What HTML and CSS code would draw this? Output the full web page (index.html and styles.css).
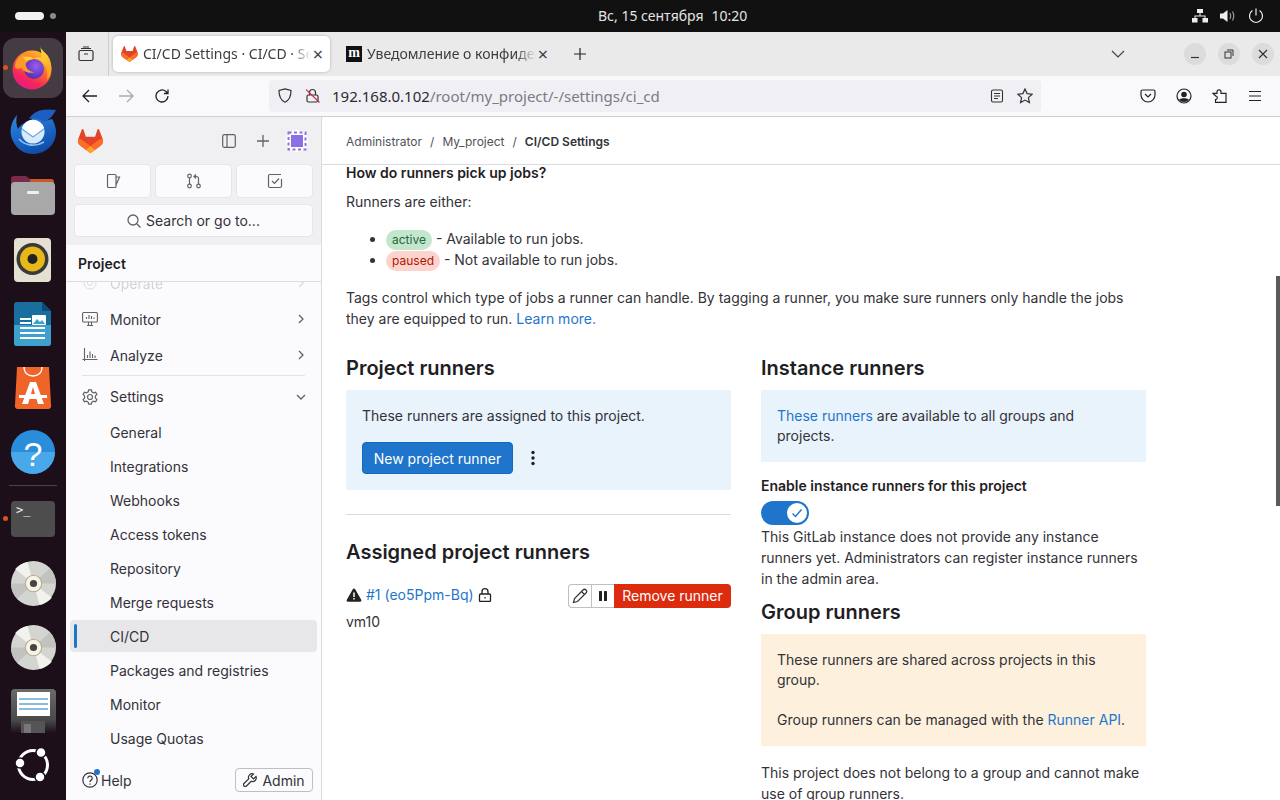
FILE: index.html
```html
<!DOCTYPE html>
<html lang="en">
<head>
  <meta charset="UTF-8">
  <title>CI/CD Settings</title>
  <link rel="stylesheet" href="styles.css">
</head>
<body>

<svg class="defs" width="0" height="0">
  <symbol id="tanuki" viewBox="0 0 25 24">
    <path fill="#E24329" d="m24.507 9.5-.034-.09L21.082.562a.896.896 0 0 0-1.694.091l-2.29 7.01H7.825L5.535.653a.898.898 0 0 0-1.694-.09L.451 9.411.416 9.5a6.297 6.297 0 0 0 2.09 7.278l.012.01.03.022 5.16 3.867 2.56 1.935 1.554 1.176a1.051 1.051 0 0 0 1.268 0l1.555-1.176 2.56-1.935 5.197-3.89.014-.01A6.297 6.297 0 0 0 24.507 9.5Z"/>
    <path fill="#FC6D26" d="m24.507 9.5-.034-.09a11.44 11.44 0 0 0-4.56 2.051l-7.447 5.632 4.742 3.584 5.197-3.89.014-.01A6.297 6.297 0 0 0 24.507 9.5Z"/>
    <path fill="#FCA326" d="m7.707 20.677 2.56 1.935 1.555 1.176a1.051 1.051 0 0 0 1.268 0l1.555-1.176 2.56-1.935-4.743-3.584-4.755 3.584Z"/>
    <path fill="#FC6D26" d="M5.01 11.461a11.43 11.43 0 0 0-4.56-2.05L.416 9.5a6.297 6.297 0 0 0 2.09 7.278l.012.01.03.022 5.16 3.867 4.745-3.584-7.444-5.632Z"/>
  </symbol>
  <symbol id="cd" viewBox="0 0 44 44">
    <circle cx="22" cy="22" r="22" fill="#d4d4d0"/>
    <path fill="#f2f2ee" d="M22 22 4 8a22 22 0 0 1 12-7zM22 22l18 14a22 22 0 0 1-12 7z"/>
    <path fill="#c2c2be" d="M22 22 44 22a22 22 0 0 0-6-15zM22 22H0a22 22 0 0 0 6 15z"/>
    <circle cx="22" cy="22" r="8" fill="#f6f3e6" stroke="#b5ad93"/>
    <circle cx="22" cy="22" r="3.5" fill="#444"/>
  </symbol>
</svg>

<header class="topbar">
  <div class="workspaces"><span class="pill"></span><span class="wsdot"></span></div>
  <div class="clock">Вс, 15 сентября<span class="clock-time">10:20</span></div>
  <div class="tray">
    <svg width="16" height="14" viewBox="0 0 16 14" fill="#eee"><rect x="5" y="0" width="6" height="4"/><rect x="0" y="9" width="5.5" height="4.500"/><rect x="10.500" y="9" width="5.500" height="4.500"/><path d="M7.500 4h1v2.500H13.500V9h-1V7.500h-9V9h-1V6.500h5z"/></svg>
    <svg width="16" height="14" viewBox="0 0 16 14" fill="#eee"><path d="M0 4.500h3L7.500 1v12L3 9.500H0z"/><path d="M10 4q1.500 3 0 6M12.500 2.500q2.500 4.500 0 9" fill="none" stroke="#999" stroke-width="1.200"/></svg>
    <svg width="16" height="16" viewBox="0 0 16 16" fill="none" stroke="#eee" stroke-width="1.200"><path d="M4.500 2.500a6.500 6.500 0 1 0 7 0M8 .5v7"/></svg>
  </div>
</header>

<div class="desktop">
  <nav class="dock">
    <div class="dock-item active">
      <span class="run-dot"></span>
      <svg width="44" height="44" viewBox="0 0 44 44">
        <defs>
          <linearGradient id="ffa" x1="0.800" y1="0.100" x2="0.300" y2="1"><stop offset="0" stop-color="#ffb32e"/><stop offset=".4" stop-color="#ff6a2e"/><stop offset=".75" stop-color="#f5245f"/><stop offset="1" stop-color="#e81a8a"/></linearGradient>
          <linearGradient id="ffc" x1="0.300" y1="0" x2="0.800" y2="1"><stop offset="0" stop-color="#ffe53a"/><stop offset="1" stop-color="#ff9a20"/></linearGradient>
          <radialGradient id="ffb" cx=".6" cy=".35" r=".7"><stop offset="0" stop-color="#9a5cf0"/><stop offset="1" stop-color="#4f2bb0"/></radialGradient>
        </defs>
        <circle cx="21" cy="24" r="19.500" fill="url(#ffa)"/>
        <circle cx="23" cy="23" r="10" fill="url(#ffb)"/>
        <path fill="url(#ffc)" d="M29 0c1 4 5 6 8 10 3 5 4 10 3 16-1 3-2 6-4 8 1-7 0-14-5-18-2-2-6-4-10-3 3-1 7-2 9-1 1-4 0-8-1-12z"/>
        <path fill="#ff9a2a" d="M4 22C4 14 9 9 14 8c-1 2-1 3 0 4 3-1 6-1 9 1-3 0-5 1-6 2-2 1-3 3-2 5 1 4 5 6 9 6-5 2-11 0-14-4-2 1-4 1-6 0z"/>
        <path fill="#ffd23a" d="M12 11c3-1 8-1 11 2-3 0-6 1-8 2-1-1-2-3-3-4z"/>
      </svg>
    </div>
    <div class="dock-item">
      <svg width="48" height="46" viewBox="0 0 48 46">
        <defs>
          <linearGradient id="tba" x1="0.200" y1="0" x2="0.600" y2="1"><stop offset="0" stop-color="#2a86e0"/><stop offset="1" stop-color="#0f4aa8"/></linearGradient>
        </defs>
        <path fill="url(#tba)" d="M8 6C2 13 0 22 3 30c4 10 12 15 21 15 12 0 23-9 23-22 0-5-2-10-4-13l-8 2C29 5 24 8 22 11 15 13 11 17 9 20 7 16 7 11 8 6z"/>
        <path fill="#1c5fc0" d="M20 10C24 2 34-1 47 1c-2 3-4 7-7 9l-5 3c-5-4-11-4-15-3z"/>
        <circle cx="24" cy="23" r="11.500" fill="#d8eafc"/>
        <path fill="#fff" d="M13 19l11 9 11-9a11.500 11.500 0 0 0-22 0z"/>
        <path fill="none" stroke="#6fa8e6" stroke-width="1.200" d="M13 20l11 8 11-8"/>
        <path fill="none" stroke="#7fc0f5" stroke-width="1.800" d="M10 30c6 7 17 8 25 3"/>
      </svg>
    </div>
    <div class="dock-item">
      <svg width="46" height="44" viewBox="0 0 46 44">
        <path fill="#7a2a4a" d="M1 6a3 3 0 0 1 3-3h12l4 3h20a4 4 0 0 1 4 4v8H1z" transform="translate(0 -1)"/>
        <path fill="#c9572b" d="M20 6h21a3 3 0 0 1 3 3v5H20z" transform="translate(0 -1)"/>
        <rect x="1" y="8" width="44" height="33" rx="4" fill="#a8a8a8"/>
        <rect x="17" y="17" width="12" height="3" rx="1" fill="#f0f0f0"/>
      </svg>
    </div>
    <div class="dock-item">
      <svg width="38" height="44" viewBox="0 0 38 44">
        <rect x="0" y="0" width="37" height="44" rx="4" fill="#e4e0d2"/>
        <circle cx="18.500" cy="21" r="16" fill="#3a3a3a"/>
        <circle cx="18.500" cy="21" r="12.500" fill="#e8b818"/>
        <circle cx="18.500" cy="21" r="5" fill="#222"/>
      </svg>
    </div>
    <div class="dock-item">
      <svg width="38" height="46" viewBox="0 0 38 46">
        <path fill="#1a6e9e" d="M3 1h25l9 9v32a3 3 0 0 1-3 3H3a3 3 0 0 1-3-3V4a3 3 0 0 1 3-3z"/>
        <path fill="#3ea0cc" d="M0 24h37v18a3 3 0 0 1-3 3H3a3 3 0 0 1-3-3z"/>
        <path fill="#0d4d72" d="M28 1l9 9h-9z"/>
        <path stroke="#fff" stroke-width="1.800" d="M6 18h11M6 22h11M6 27h25M6 32h25M6 37h25"/>
        <rect x="18" y="14" width="14" height="10" rx="1" fill="#fff"/>
        <path fill="#3ea0cc" d="M19 23l4-5 3 3 2-2 3 4z"/>
      </svg>
    </div>
    <div class="dock-item">
      <svg width="38" height="44" viewBox="0 0 38 44">
        <path fill="#f0642a" d="M3 1h32l2 38a3 3 0 0 1-3 4H4a3 3 0 0 1-3-4z"/>
        <path fill="none" stroke="#fff" stroke-width="1.300" d="M10 1c0 6 4 9 9 9s9-3 9-9"/>
        <path fill="#fff" d="M16 16h6l8 22h-6l-1.500-5h-7L14 38H8zm3 5-2 7h4z"/>
        <rect x="5" y="29" width="28" height="3" fill="#fff"/>
      </svg>
    </div>
    <div class="dock-item">
      <svg width="44" height="44" viewBox="0 0 44 44">
        <circle cx="22" cy="22" r="22" fill="#2a8ddc"/>
        <path fill="#48a8ea" d="M0 22h44a22 22 0 0 1-44 0z"/>
        <text x="22" y="36" class="help-mark">?</text>
      </svg>
    </div>
    <div class="dock-sep"></div>
    <div class="dock-item term">
      <span class="run-dot"></span>
      <div class="term-box">&gt;_</div>
    </div>
    <div class="dock-item disc"><svg width="45" height="45"><use href="#cd"/></svg></div>
    <div class="dock-item disc"><svg width="45" height="45"><use href="#cd"/></svg></div>
    <div class="dock-item">
      <svg width="45" height="44" viewBox="0 0 45 44">
        <defs>
          <linearGradient id="sva" x1="0" y1="0" x2="0" y2="1"><stop offset="0" stop-color="#6a6a6a"/><stop offset=".7" stop-color="#4a4a4a"/><stop offset="1" stop-color="#1d0f1a"/></linearGradient>
        </defs>
        <rect x="0" y="0" width="45" height="44" rx="4" fill="url(#sva)"/>
        <rect x="6" y="3" width="33" height="24" fill="#fff"/>
        <path stroke="#1a78b8" d="M8 10h29M8 15h29M8 20h29"/>
        <rect x="10" y="32" width="24" height="12" fill="#555"/>
        <rect x="13" y="35" width="7" height="9" fill="#777"/>
      </svg>
    </div>
    <div class="dock-item ubuntu">
      <svg width="36" height="36" viewBox="0 0 36 36">
        <circle cx="18" cy="18" r="14.500" fill="none" stroke="#fff" stroke-width="3"/>
        <circle cx="5" cy="16" r="5" fill="#fff" stroke="#1d0f1a" stroke-width="1.500"/>
        <circle cx="26" cy="5.500" r="5" fill="#fff" stroke="#1d0f1a" stroke-width="1.500"/>
        <circle cx="25" cy="30" r="5" fill="#fff" stroke="#1d0f1a" stroke-width="1.500"/>
      </svg>
    </div>
  </nav>

  <div class="browser">
    <div class="tabstrip">
      <div class="tab-tools">
        <svg width="16" height="16" viewBox="0 0 16 16" fill="none" stroke="#333" stroke-width="1.200"><rect x="1" y="4.500" width="14" height="10" rx="1.500"/><path d="M3 2.500h10M5 1h6M6 8h4"/></svg>
      </div>
      <div class="tab current">
        <svg class="favicon" width="17" height="16"><use href="#tanuki"/></svg>
        <span class="tab-title">CI/CD Settings · CI/CD · Settings</span>
        <span class="tab-x">×</span>
      </div>
      <div class="tab other">
        <span class="fav-m">m</span>
        <span class="tab-title">Уведомление о конфиденциальности</span>
        <span class="tab-x">×</span>
      </div>
      <div class="tab-new">
        <svg width="14" height="14" viewBox="0 0 14 14" stroke="#222" stroke-width="1.200"><path d="M7 1v12M1 7h12"/></svg>
      </div>
      <div class="tab-list">
        <svg width="14" height="8" viewBox="0 0 14 8" fill="none" stroke="#444" stroke-width="1.200"><path d="M1 1l6 6 6-6"/></svg>
      </div>
      <div class="win-btns">
        <span class="win-btn"><svg width="10" height="10" viewBox="0 0 10 10" stroke="#333" stroke-width="1.200"><path d="M1 8.500h8"/></svg></span>
        <span class="win-btn"><svg width="10" height="10" viewBox="0 0 10 10" fill="none" stroke="#333"><rect x="1" y="3" width="6" height="6"/><path d="M3 1h6v6"/></svg></span>
        <span class="win-btn"><svg width="10" height="10" viewBox="0 0 10 10" stroke="#333" stroke-width="1.200"><path d="M1 1l8 8M9 1l-8 8"/></svg></span>
      </div>
    </div>

    <div class="toolbar">
      <div class="nav-btns">
        <svg width="16" height="14" viewBox="0 0 16 14" fill="none" stroke="#222" stroke-width="1.300"><path d="M15 7H1.500M7 1 1 7l6 6"/></svg>
        <svg width="16" height="14" viewBox="0 0 16 14" fill="none" stroke="#aaa" stroke-width="1.300"><path d="M1 7h13.500M9 1l6 6-6 6"/></svg>
        <svg width="16" height="16" viewBox="0 0 16 16" fill="none" stroke="#222" stroke-width="1.300"><path d="M14 8a6 6 0 1 1-2-4.500L14 5.500M14 1.500v4h-4"/></svg>
      </div>
      <div class="urlbar">
        <svg width="14" height="15" viewBox="0 0 14 15" fill="none" stroke="#333" stroke-width="1.200"><path d="M7 .8 13 2.500c0 5 -1 9.500-6 11.700C2 12 1 7.500 1 2.500z"/></svg>
        <svg class="lock-off" width="14" height="15" viewBox="0 0 14 15" fill="none" stroke="#333" stroke-width="1.200"><rect x="1" y="7" width="11" height="7" rx="1.500"/><path d="M3.500 7V4.500a3 3 0 0 1 6 0V7"/><path stroke="#e22850" d="M0 1.500 13.500 14.500"/></svg>
        <div class="url"><span class="host">192.168.0.102</span>/root/my_project/-/settings/ci_cd</div>
        <svg class="url-end" width="14" height="14" viewBox="0 0 14 14" fill="none" stroke="#333" stroke-width="1.100"><rect x="1.500" y="1" width="11" height="12" rx="1.500"/><path d="M4 4.500h6M4 7h6M4 9.500h4"/></svg>
        <svg width="16" height="16" viewBox="0 0 16 16" fill="none" stroke="#333" stroke-width="1.200"><path d="M8 1l2.100 4.600 5 .6-3.700 3.400 1 5L8 12.100 3.600 14.600l1-5L.9 6.200l5-.6z"/></svg>
      </div>
      <div class="tool-icons">
        <svg width="16" height="14" viewBox="0 0 16 14" fill="none" stroke="#222" stroke-width="1.200"><path d="M1 2.500A1.500 1.500 0 0 1 2.500 1h11A1.500 1.500 0 0 1 15 2.500V6a7 7 0 0 1-14 0z"/><path d="M5 5l3 3 3-3"/></svg>
        <svg width="16" height="16" viewBox="0 0 16 16"><circle cx="8" cy="8" r="7" fill="none" stroke="#222" stroke-width="1.200"/><circle cx="8" cy="6.500" r="2.800" fill="#222"/><path fill="#222" d="M3 12c1-2.500 9-2.500 10 0-2.500 2.500-7.500 2.500-10 0z"/></svg>
        <svg width="16" height="16" viewBox="0 0 16 16" fill="none" stroke="#222" stroke-width="1.200"><path d="M1 5.500h4V4a2 2 0 0 1 4 0v1.500h5v9H3.500v-2.700a1.700 1.700 0 0 0 0-3.600V8z" transform="translate(0 -.2)"/></svg>
        <svg width="14" height="12" viewBox="0 0 14 12" stroke="#222" stroke-width="1.200"><path d="M1 1.500h12M1 6h12M1 10.500h12"/></svg>
      </div>
    </div>

    <div class="page">
      <aside class="sidebar">
        <div class="side-top">
          <div class="side-head">
            <svg class="logo" width="25" height="24"><use href="#tanuki"/></svg>
            <div class="side-head-icons">
              <svg width="14" height="14" viewBox="0 0 14 14" fill="none" stroke="#626168" stroke-width="1.200"><rect x=".7" y=".7" width="12.600" height="12.600" rx="1.500"/><path d="M5 .7v12.600"/></svg>
              <svg width="14" height="14" viewBox="0 0 14 14" stroke="#626168" stroke-width="1.300"><path d="M7 1v12M1 7h12"/></svg>
              <span class="avatar"><svg width="22" height="22" viewBox="0 0 22 22"><circle cx="11" cy="11" r="11" fill="#fff"/><rect x="5" y="5" width="12" height="12" fill="#8c6fe4"/><rect x="2.500" y="2.500" width="17" height="17" fill="none" stroke="#8c6fe4" stroke-width="2" stroke-dasharray="3 2.500"/></svg></span>
            </div>
          </div>
          <div class="quick-row">
            <a class="quick"><svg width="16" height="16" viewBox="0 0 16 16" fill="none" stroke="#626168" stroke-width="1.200"><path d="M10 14.500H3.500a1 1 0 0 1-1-1v-11a1 1 0 0 1 1-1H10a1 1 0 0 1 1 1v11a1 1 0 0 1-1 1zM11 4h3.500L11 12"/></svg></a>
            <a class="quick"><svg width="16" height="16" viewBox="0 0 16 16" fill="none" stroke="#626168" stroke-width="1.200"><circle cx="3.500" cy="3" r="1.800"/><circle cx="3.500" cy="13" r="1.800"/><circle cx="12.500" cy="13" r="1.800"/><path d="M3.500 5v6M12.500 11V5.500a2 2 0 0 0-2-2H8M10 1.500 8 3.500l2 2"/></svg></a>
            <a class="quick"><svg width="16" height="16" viewBox="0 0 16 16" fill="none" stroke="#626168" stroke-width="1.200"><path d="M14.500 6v7a1.500 1.500 0 0 1-1.500 1.500H3A1.500 1.500 0 0 1 1.500 13V3A1.500 1.500 0 0 1 3 1.500h11"/><path d="M5 8l2.500 2.500L12 5.500"/></svg></a>
          </div>
          <div class="search">
            <svg width="14" height="14" viewBox="0 0 14 14" fill="none" stroke="#626168" stroke-width="1.300"><circle cx="6" cy="6" r="5"/><path d="M9.700 9.700 13.500 13.500"/></svg>
            Search or go to...
          </div>
        </div>
        <div class="side-project">Project</div>
        <div class="side-nav">
          <div class="nav-faded">
            <svg width="16" height="16" viewBox="0 0 16 16" fill="none" stroke="#626168"><circle cx="8" cy="8" r="6"/><circle cx="8" cy="8" r="2.500"/></svg>
            <span>Operate</span>
            <svg class="chev" width="10" height="10" viewBox="0 0 10 10" fill="none" stroke="#626168" stroke-width="1.300"><path d="M3 1l4 4-4 4"/></svg>
          </div>
          <div class="nav-row">
            <svg width="16" height="16" viewBox="0 0 16 16" fill="none" stroke="#626168" stroke-width="1.100"><rect x=".6" y="1.500" width="14.800" height="9.500" rx="1"/><path d="M5 14.500h6M6.500 11v3.500M9.500 11v3.500M4.500 8V6M7 8V4M9.500 8V5M12 8V6.500"/></svg>
            <span>Monitor</span>
            <svg class="chev" width="10" height="10" viewBox="0 0 10 10" fill="none" stroke="#626168" stroke-width="1.300"><path d="M3 1l4 4-4 4"/></svg>
          </div>
          <div class="nav-row">
            <svg width="16" height="16" viewBox="0 0 16 16" fill="none" stroke="#626168" stroke-width="1.100"><path d="M2.500 1v13M.5 12.500h15M5.500 11V8M8 11V4.500M10.500 11V7M13 11V8.500"/></svg>
            <span>Analyze</span>
            <svg class="chev" width="10" height="10" viewBox="0 0 10 10" fill="none" stroke="#626168" stroke-width="1.300"><path d="M3 1l4 4-4 4"/></svg>
          </div>
          <div class="nav-sep"></div>
          <div class="nav-row settings">
            <svg width="16" height="16" viewBox="0 0 16 16" fill="none" stroke="#626168" stroke-width="1.200"><circle cx="8" cy="8" r="2.500"/><path d="M6.700.8h2.600l.5 2 1.800 1 2-.6 1.300 2.300-1.500 1.400v2.200l1.500 1.400-1.300 2.300-2-.6-1.800 1-.5 2H6.700l-.5-2-1.800-1-2 .6L1.100 10.500l1.500-1.400V6.900L1.100 5.500l1.300-2.300 2 .6 1.800-1z"/></svg>
            <span>Settings</span>
            <svg class="chev" width="10" height="10" viewBox="0 0 10 10" fill="none" stroke="#626168" stroke-width="1.300"><path d="M1 3l4 4 4-4"/></svg>
          </div>
          <a class="sub">General</a>
          <a class="sub">Integrations</a>
          <a class="sub">Webhooks</a>
          <a class="sub">Access tokens</a>
          <a class="sub">Repository</a>
          <a class="sub">Merge requests</a>
          <a class="sub current">CI/CD</a>
          <a class="sub">Packages and registries</a>
          <a class="sub">Monitor</a>
          <a class="sub">Usage Quotas</a>
        </div>
        <div class="side-foot">
          <div class="help">
            <span class="help-icon">
              <svg width="16" height="16" viewBox="0 0 16 16" fill="none" stroke="#333238" stroke-width="1.200"><circle cx="8" cy="8" r="7.200"/><path d="M5.800 6.200a2.200 2.200 0 1 1 3.400 1.900C8.400 8.600 8 9 8 10M8 11.500v1.200"/></svg>
              <span class="help-badge"></span>
            </span>
            Help
          </div>
          <div class="admin">
            <svg width="14" height="14" viewBox="0 0 14 14" fill="none" stroke="#333238" stroke-width="1.200"><path d="M13 3.500 10.500 6 8 3.500 10.500 1a3.700 3.700 0 0 0-4.800 4.800L1 10.500a1.700 1.700 0 0 0 2.500 2.500l4.700-4.700A3.700 3.700 0 0 0 13 3.500z"/></svg>
            Admin
          </div>
        </div>
      </aside>

      <main class="content">
        <div class="crumbs">
          <a>Administrator</a><span class="slash">/</span><a>My_project</a><span class="slash">/</span><b>CI/CD Settings</b>
        </div>
        <div class="scroller">
          <h5>How do runners pick up jobs?</h5>
          <p>Runners are either:</p>
          <ul class="states">
            <li><span class="badge on">active</span> - Available to run jobs.</li>
            <li><span class="badge off">paused</span> - Not available to run jobs.</li>
          </ul>
          <p class="tags">Tags control which type of jobs a runner can handle. By tagging a runner, you make sure runners only handle the jobs they are equipped to run. <a class="link">Learn more.</a></p>

          <div class="columns">
            <section>
              <h3>Project runners</h3>
              <div class="note blue project-note">
                <div>These runners are assigned to this project.</div>
                <div class="note-actions">
                  <button class="btn-primary">New project runner</button>
                  <svg width="16" height="16" viewBox="0 0 16 16" fill="#1f1e24"><circle cx="8" cy="2.500" r="1.700"/><circle cx="8" cy="8" r="1.700"/><circle cx="8" cy="13.500" r="1.700"/></svg>
                </div>
              </div>
              <hr>
              <h3>Assigned project runners</h3>
              <div class="runner">
                <div class="runner-name">
                  <svg width="16" height="16" viewBox="0 0 16 16" fill="#222"><path d="M8 1.500c.5 0 .9.300 1.200.8l6 10.500c.5 1-.1 2-1.200 2H2c-1.100 0-1.700-1-1.200-2l6-10.500c.3-.5.700-.8 1.200-.8z"/><path stroke="#fff" stroke-width="1.500" d="M8 5.500v4.500M8 11v1.500"/></svg>
                  <a class="link">#1 (eo5Ppm-Bq)</a>
                  <svg width="14" height="14" viewBox="0 0 14 14" fill="none" stroke="#222" stroke-width="1.300"><rect x="1.500" y="6" width="11" height="7.500" rx="1"/><path d="M4 6V3.700a3 3 0 0 1 6 0V6M7 9v1.500"/></svg>
                </div>
                <div class="runner-btns">
                  <span class="btn-icon"><svg width="16" height="16" viewBox="0 0 16 16" fill="none" stroke="#333238" stroke-width="1.200"><path d="M1.500 14.500l1-4L11 2a1.800 1.800 0 0 1 3 3l-8.500 8.500zM9.500 3.500l3 3"/></svg></span>
                  <span class="btn-icon"><svg width="10" height="12" viewBox="0 0 10 12" fill="#222"><rect x="1" y="1" width="3" height="10" rx=".5"/><rect x="6" y="1" width="3" height="10" rx=".5"/></svg></span>
                  <span class="btn-danger">Remove runner</span>
                </div>
              </div>
              <div class="runner-desc">vm10</div>
            </section>

            <section>
              <h3>Instance runners</h3>
              <div class="note blue"><a class="link">These runners</a> are available to all groups and projects.</div>
              <div class="enable-label">Enable instance runners for this project</div>
              <div class="toggle"><span class="knob"><svg width="12" height="12" viewBox="0 0 12 12" fill="none" stroke="#1f75cb" stroke-width="1.400"><path d="M1.500 6.500 4.500 9.500 10.500 2.500"/></svg></span></div>
              <div class="enable-help">This GitLab instance does not provide any instance runners yet. Administrators can register instance runners in the admin area.</div>
              <h3 class="group-h">Group runners</h3>
              <div class="note orange">
                <div>These runners are shared across projects in this group.</div>
                <div class="note-gap">Group runners can be managed with the <a class="link">Runner API</a>.</div>
              </div>
              <div class="no-group">This project does not belong to a group and cannot make use of group runners.</div>
            </section>
          </div>
        </div>
        <div class="scrollthumb"></div>
      </main>
    </div>
  </div>
</div>

</body>
</html>
```

FILE: styles.css
```css
* {
  box-sizing: border-box;
}

html, body {
  margin: 0;
  height: 800px;
  overflow: hidden;
}

body {
  font-family: Inter, "Noto Sans", sans-serif;
  font-size: 14px;
  color: #333238;
  background: #111;
}

svg {
  display: block;
  flex-shrink: 0;
}

.defs {
  position: absolute;
}

/* top bar */
.topbar {
  height: 32px;
  background: #111;
  display: flex;
  align-items: center;
  justify-content: space-between;
  padding: 0 16px 0 15px;
  position: relative;
}

.workspaces {
  display: flex;
  align-items: center;
  gap: 6px;
}

.pill {
  width: 29px;
  height: 8px;
  border-radius: 4px;
  background: #f2f2f2;
}

.wsdot {
  width: 6px;
  height: 6px;
  border-radius: 50%;
  background: #8a8a8a;
}

.clock {
  font-family: "Noto Sans", sans-serif;
  font-size: 14px;
  color: #e4e4e4;
  position: absolute;
  left: 598px;
  top: 6px;
}

.clock-time {
  margin-left: 8px;
}

.tray {
  display: flex;
  align-items: center;
  gap: 12px;
}

.desktop {
  display: flex;
  height: 768px;
}

/* dock */
.dock {
  width: 66px;
  background: #1d0f1a;
  display: flex;
  flex-direction: column;
  align-items: center;
  padding-top: 6px;
  flex-shrink: 0;
}

.dock-item {
  width: 60px;
  height: 64px;
  display: flex;
  align-items: center;
  justify-content: center;
  position: relative;
}

.dock-item.active {
  height: 60px;
  margin-bottom: 2px;
  background: #453c43;
  border-radius: 12px;
}

.run-dot {
  position: absolute;
  left: 0;
  top: 27px;
  width: 5px;
  height: 5px;
  border-radius: 50%;
  background: #d9531e;
}

.dock-sep {
  width: 48px;
  height: 1px;
  background: #4c4349;
  margin: 1px 0 1px;
}

.term .run-dot {
  top: 29px;
}

.term-box {
  width: 44px;
  height: 36px;
  background: #4d4d4d;
  border-radius: 4px;
  color: #eee;
  font-family: "DejaVu Sans Mono", monospace;
  font-size: 12px;
  line-height: 14px;
  padding: 2px 5px;
}

.help-mark {
  font-family: "Liberation Sans", sans-serif;
  font-size: 34px;
  fill: #fff;
  text-anchor: middle;
}

.ubuntu {
  height: 44px;
}

/* browser chrome */
.browser {
  flex: 1;
  min-width: 0;
  display: flex;
  flex-direction: column;
}

.tabstrip {
  height: 44px;
  background: #eaeaea;
  display: flex;
  align-items: center;
}

.tab-tools {
  width: 43px;
  height: 44px;
  border-right: 1px solid #cfcfcf;
  padding-right: 3px;
  display: flex;
  align-items: center;
  justify-content: center;
}

.tab {
  height: 36px;
  display: flex;
  align-items: center;
  font-family: "Noto Sans", sans-serif;
  font-size: 14px;
  color: #3c3c3c;
}

.tab.current {
  width: 217px;
  margin-left: 4px;
  background: #fff;
  border-radius: 5px;
  box-shadow: 0 0 3px rgba(0, 0, 0, 0.25);
  padding: 0 6px 0 8px;
}

.tab.other {
  width: 228px;
  padding: 0 9px 0 16px;
}

.tab-title {
  flex: 1;
  min-width: 0;
  white-space: nowrap;
  overflow: hidden;
  margin: 0 0 2px 5px;
  -webkit-mask-image: linear-gradient(to right, #000 88%, transparent 100%);
  mask-image: linear-gradient(to right, #000 88%, transparent 100%);
}

.tab-x {
  font-size: 18px;
  line-height: 18px;
  width: 12px;
  text-align: center;
  margin-left: 1px;
}

.fav-m {
  width: 16px;
  height: 16px;
  background: #111;
  color: #fff;
  font-family: "Liberation Serif", serif;
  font-weight: bold;
  font-size: 14px;
  line-height: 14px;
  text-align: center;
  flex-shrink: 0;
}

.tab-new {
  margin-left: 15px;
}

.tab-list {
  margin-left: auto;
  margin-right: 59px;
}

.win-btns {
  display: flex;
  gap: 12px;
  margin-right: 6px;
}

.win-btn {
  width: 22px;
  height: 22px;
  border-radius: 50%;
  background: #dcdcdc;
  display: flex;
  align-items: center;
  justify-content: center;
}

.toolbar {
  height: 41px;
  background: #f9f9fb;
  border-bottom: 1px solid #cfcfd8;
  display: flex;
  align-items: center;
  padding-bottom: 1px;
}

.nav-btns {
  display: flex;
  align-items: center;
  gap: 20px;
  margin-left: 16px;
  width: 187px;
}

.urlbar {
  width: 772px;
  height: 32px;
  background: #f0f0f4;
  border-radius: 4px;
  display: flex;
  align-items: center;
  padding: 0 8px 0 9px;
}

.lock-off {
  margin-left: 14px;
}

.url {
  font-family: "Noto Sans", sans-serif;
  font-size: 15px;
  color: #7b7b85;
  margin-left: 12px;
  white-space: nowrap;
}

.host {
  color: #2b2a33;
}

.url-end {
  margin-left: auto;
  margin-right: 13px;
}

.tool-icons {
  display: flex;
  align-items: center;
  gap: 20px;
  margin-left: 99px;
}

/* gitlab page */
.page {
  flex: 1;
  min-height: 0;
  display: flex;
  background: #fff;
}

.sidebar {
  width: 256px;
  flex-shrink: 0;
  background: #fbfafd;
  border-right: 1px solid #dcdcde;
  display: flex;
  flex-direction: column;
}

.side-top {
  background: #f0f0f2;
  height: 128px;
  padding: 0 9px;
}

.side-head {
  height: 48px;
  display: flex;
  align-items: center;
  justify-content: space-between;
  padding: 0 4px 0 3px;
}

.side-head-icons {
  display: flex;
  align-items: center;
  gap: 20px;
}

.side-head-icons .avatar {
  margin-left: -4px;
}

.avatar {
  display: block;
}

.quick-row {
  display: grid;
  grid-template-columns: repeat(3, 1fr);
  gap: 6px;
}

.quick {
  height: 32px;
  background: #fbfafd;
  border-radius: 4px;
  box-shadow: 0 0 0 1px #e6e6e9;
  display: flex;
  align-items: center;
  justify-content: center;
}

.search {
  height: 31px;
  margin-top: 8px;
  background: #fbfafd;
  border-radius: 4px;
  box-shadow: 0 0 0 1px #e6e6e9;
  display: flex;
  align-items: center;
  justify-content: center;
  gap: 5px;
  color: #333238;
}

.side-project {
  height: 37px;
  border-bottom: 1px solid #dcdcde;
  padding: 0 12px;
  display: flex;
  align-items: center;
  font-weight: 600;
  color: #1f1e24;
}

.side-nav {
  flex: 1;
  min-height: 0;
  overflow: hidden;
}

.nav-faded,
.nav-row {
  height: 36px;
  display: flex;
  align-items: center;
  padding: 0 15px 0 16px;
  gap: 12px;
  color: #333238;
}

.nav-faded {
  margin-top: -17px;
  opacity: 0.2;
}

.chev {
  margin-left: auto;
}

.nav-sep {
  height: 1px;
  background: #e3e3e6;
  margin: 2px 16px 2px;
}

.nav-row.settings {
  height: 37px;
}

.sub {
  height: 32px;
  margin: 0 4px 2px;
  padding-left: 40px;
  border-radius: 4px;
  display: flex;
  align-items: center;
  color: #333238;
  position: relative;
}

.sub:first-of-type {
  margin-top: 1px;
}

.sub.current {
  background: #e7e7ea;
}

.sub.current::before {
  content: "";
  position: absolute;
  left: 4px;
  top: 4px;
  width: 3px;
  height: 24px;
  border-radius: 2px;
  background: #1f75cb;
}

.side-foot {
  height: 50px;
  flex-shrink: 0;
  display: flex;
  align-items: center;
  justify-content: space-between;
  padding: 10px 8px 0 16px;
}

.help {
  display: flex;
  align-items: center;
  gap: 3px;
}

.help-icon {
  position: relative;
}

.help-badge {
  position: absolute;
  right: -2px;
  top: -3px;
  width: 6px;
  height: 6px;
  border-radius: 50%;
  background: #1f75cb;
}

.admin {
  height: 24px;
  width: 78px;
  border: 1px solid #bfbfc3;
  border-radius: 4px;
  display: flex;
  align-items: center;
  justify-content: center;
  gap: 5px;
}

/* main column */
.content {
  flex: 1;
  min-width: 0;
  display: flex;
  flex-direction: column;
  position: relative;
}

.crumbs {
  height: 48px;
  flex-shrink: 0;
  border-bottom: 1px solid #dcdcde;
  padding: 1px 0 0 24px;
  display: flex;
  align-items: center;
  font-size: 12px;
  color: #535158;
}

.crumbs b {
  font-weight: 600;
  color: #333238;
}

.slash {
  margin: 0 8px;
}

.scroller {
  flex: 1;
  min-height: 0;
  overflow: hidden;
  padding: 0 24px;
  line-height: 20px;
}

h5 {
  margin: -2px 0 0;
  font-size: 14px;
  line-height: 20px;
  font-weight: 600;
  color: #1f1e24;
}

p {
  margin: 9px 0 0;
  max-width: 800px;
}

.states {
  margin: 16px 0 0;
  padding-left: 40px;
  line-height: 21px;
}

.states li {
  height: 21px;
}

.badge {
  display: inline-block;
  font-size: 12px;
  line-height: 20px;
  padding: 0 6px;
  border-radius: 10px;
}

.badge.on {
  background: #c3e6cd;
  color: #24663b;
}

.badge.off {
  background: #fdd4cd;
  color: #ae1800;
}

.tags {
  margin-top: 17px;
  line-height: 21px;
}

.link {
  color: #1f75cb;
}

.columns {
  display: grid;
  grid-template-columns: 385px 385px;
  gap: 30px;
  margin-top: 26px;
}

h3 {
  margin: 0;
  font-size: 20px;
  line-height: 26px;
  font-weight: 600;
  color: #1f1e24;
}

.note {
  margin-top: 9px;
  padding: 16px;
}

.blue {
  background: #e9f3fc;
}

.orange {
  background: #fdf1dd;
}

.project-note {
  height: 100px;
}

.note-actions {
  display: flex;
  align-items: center;
  gap: 12px;
  margin-top: 16px;
}

.btn-primary {
  height: 32px;
  width: 151px;
  background: #1f75cb;
  border: 1px solid #1068bf;
  border-radius: 4px;
  color: #fff;
  font-family: inherit;
  font-size: 14px;
  padding: 0;
}

hr {
  border: 0;
  border-top: 1px solid #dcdcde;
  margin: 24px 0 24px;
}

.runner {
  display: flex;
  align-items: center;
  justify-content: space-between;
  margin-top: 19px;
}

.runner-name {
  display: flex;
  align-items: center;
  gap: 4px;
  padding-bottom: 2px;
}

.runner-btns {
  display: flex;
  height: 24px;
}

.btn-icon {
  width: 23px;
  border: 1px solid #bfbfc3;
  border-right: 0;
  display: flex;
  align-items: center;
  justify-content: center;
}

.btn-icon:first-child {
  border-radius: 4px 0 0 4px;
}

.btn-danger {
  width: 117px;
  background: #dd2b0e;
  color: #fff;
  border-radius: 0 4px 4px 0;
  display: flex;
  align-items: center;
  justify-content: center;
}

.runner-desc {
  margin-top: 4px;
}

.enable-label {
  margin-top: 14px;
  font-weight: 600;
  color: #1f1e24;
}

.toggle {
  width: 48px;
  height: 24px;
  margin-top: 5px;
  border-radius: 12px;
  background: #1f75cb;
  display: flex;
  align-items: center;
  justify-content: flex-end;
  padding-right: 2px;
}

.knob {
  width: 20px;
  height: 20px;
  border-radius: 50%;
  background: #fff;
  display: flex;
  align-items: center;
  justify-content: center;
}

.enable-help {
  line-height: 21px;
  margin-top: 1px;
}

.group-h {
  margin-top: 10px;
}

.note-gap {
  margin-top: 20px;
}

.no-group {
  margin-top: 16px;
  line-height: 21px;
}

.scrollthumb {
  position: absolute;
  right: 0;
  top: 159px;
  width: 4px;
  height: 230px;
  background: #5a5a5a;
}
```
